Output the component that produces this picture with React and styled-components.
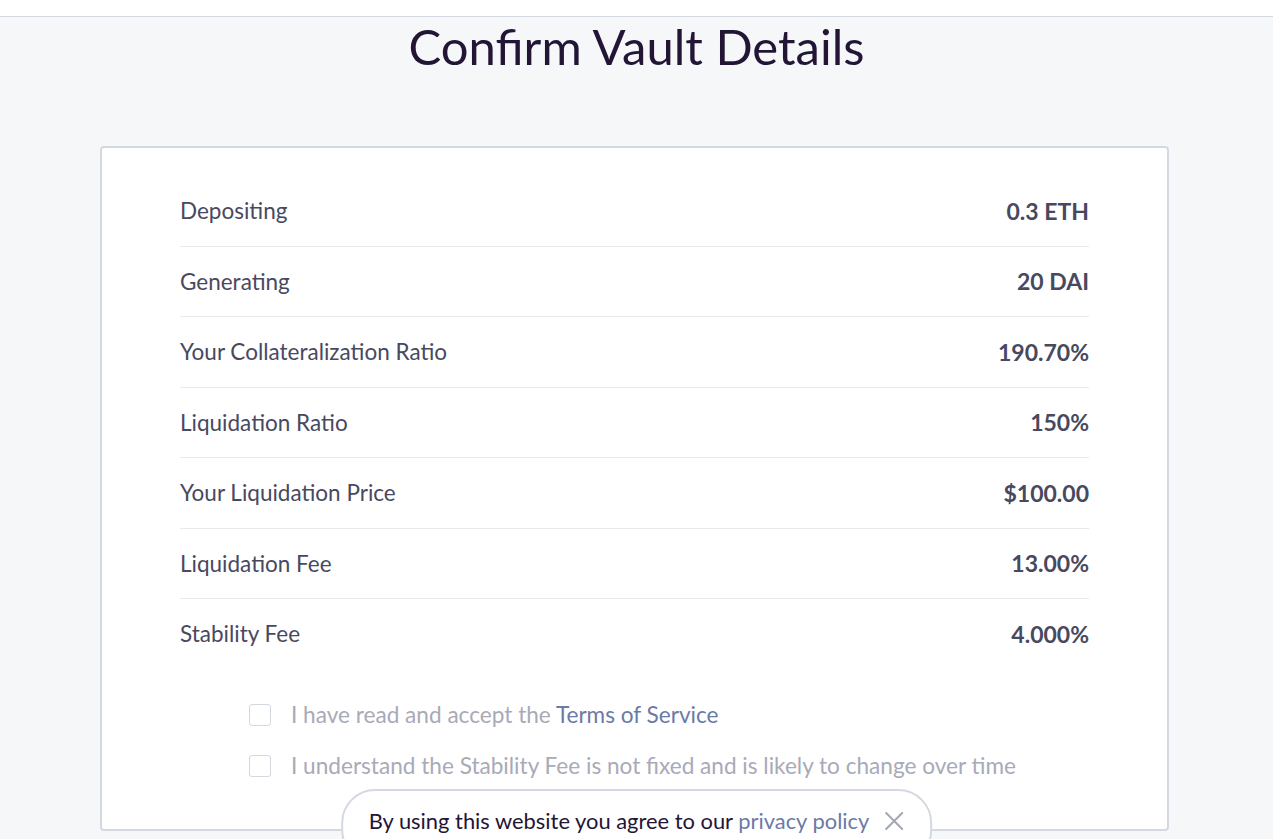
import styled, { createGlobalStyle } from "styled-components";

const GlobalStyle = createGlobalStyle`
  html, body {
    margin: 0;
    padding: 0;
    background: #f6f7f9;
    font-family: Lato, "Noto Sans", sans-serif;
    overflow: hidden;
  }
`;

const TopBar = styled.div`
  height: 16px;
  background: #fff;
  border-bottom: 1px solid #d4d9e1;
`;

const Title = styled.h1`
  margin: 0;
  height: 129px;
  text-align: center;
  font-size: 49px;
  font-weight: 400;
  line-height: 58px;
  color: #231536;
`;

const Card = styled.div`
  margin: 0 104px 0 100px;
  height: 685px;
  box-sizing: border-box;
  background: #fff;
  border: 2px solid #d4d9e1;
  border-radius: 4px;
  padding: 28px 78px 0;
`;

const Row = styled.div`
  display: flex;
  justify-content: space-between;
  align-items: center;
  height: 69.5px;
  border-bottom: ${(p) => (p.$last ? "none" : "1px solid #e9e9ec")};
  font-size: 22.5px;
  color: #48495f;
`;

const Value = styled.span`
  font-size: 23px;
  font-weight: 700;
`;

const Checks = styled.div`
  display: flex;
  flex-direction: column;
  gap: 27px;
  padding: 34px 0 0 69px;
`;

const CheckRow = styled.label`
  display: flex;
  align-items: center;
  gap: 20px;
  font-size: 22.6px;
  color: #a8aab8;
  line-height: 24px;
`;

const Box = styled.span`
  width: 22px;
  height: 22px;
  box-sizing: border-box;
  border: 1px solid #d4d9e1;
  border-radius: 3px;
  flex-shrink: 0;
`;

const Link = styled.span`
  color: #6b7aa6;
`;

const Cookie = styled.div`
  position: fixed;
  left: 50%;
  bottom: -25px;
  transform: translateX(-50%);
  display: flex;
  align-items: center;
  gap: 15px;
  padding: 16px 26px 28px 26px;
  background: #fff;
  border: 2px solid #d4d9e1;
  border-radius: 34px;
  font-size: 21.9px;
  color: #231536;
  white-space: nowrap;
`;

const Close = styled.svg`
  width: 20px;
  height: 20px;
  display: block;
`;

const rows = [
  ["Depositing", "0.3 ETH"],
  ["Generating", "20 DAI"],
  ["Your Collateralization Ratio", "190.70%"],
  ["Liquidation Ratio", "150%"],
  ["Your Liquidation Price", "$100.00"],
  ["Liquidation Fee", "13.00%"],
  ["Stability Fee", "4.000%"],
];

export default function App() {
  return (
    <>
      <GlobalStyle />
      <TopBar />
      <Title>Confirm Vault Details</Title>
      <Card>
        {rows.map(([label, value], i) => (
          <Row key={label} $last={i === rows.length - 1}>
            <span>{label}</span>
            <Value>{value}</Value>
          </Row>
        ))}
        <Checks>
          <CheckRow>
            <Box />
            <span>
              I have read and accept the <Link>Terms of Service</Link>
            </span>
          </CheckRow>
          <CheckRow>
            <Box />
            <span>I understand the Stability Fee is not fixed and is likely to change over time</span>
          </CheckRow>
        </Checks>
      </Card>
      <Cookie>
        <span>
          By using this website you agree to our <Link>privacy policy</Link>
        </span>
        <Close viewBox="0 0 20 20">
          <path d="M2 2L18 18M18 2L2 18" stroke="#a3a6b4" strokeWidth="2" strokeLinecap="round" />
        </Close>
      </Cookie>
    </>
  );
}
